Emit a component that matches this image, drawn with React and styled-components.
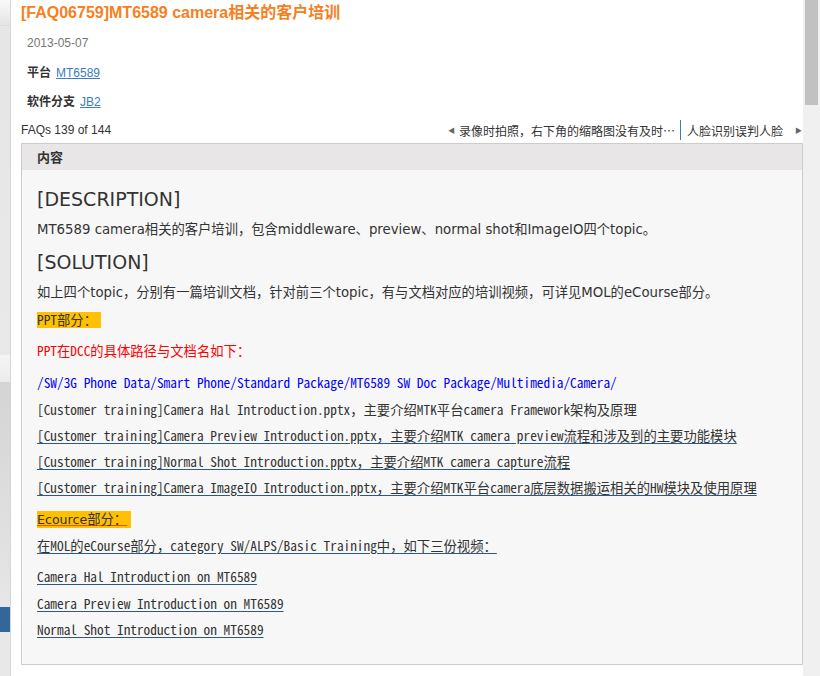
import React from "react";
import styled, { createGlobalStyle } from "styled-components";

const GlobalStyle = createGlobalStyle`
  html, body {
    margin: 0;
    padding: 0;
    height: 100%;
    overflow: hidden;
    background: #fff;
  }
  #root {
    height: 100%;
  }
`;

const Page = styled.div`
  display: flex;
  height: 676px;
  font-family: "Liberation Sans", "Noto Sans CJK SC", sans-serif;
  color: #333;
`;

const Sidebar = styled.aside`
  width: 10px;
  flex: none;
  display: flex;
  flex-direction: column;
  border-right: 1px solid #d6d6d6;
  background: #e9e9e9;
`;

const NavCap = styled.div`
  height: 25px;
  background: linear-gradient(#fafafa, #e4e4e4);
  border-bottom: 1px solid #dcdcdc;
`;

const NavFill = styled.div`
  height: ${(p) => p.$h}px;
  background: ${(p) => p.$bg};
`;

const Main = styled.main`
  flex: 1;
  min-width: 0;
  padding-left: 10px;
`;

const Title = styled.h1`
  margin: 0;
  font-size: 16px;
  line-height: 26px;
  font-weight: bold;
  color: #f7801e;
`;

const DateLine = styled.div`
  margin: 8px 0 0 6px;
  font-size: 12px;
  line-height: 18px;
  color: #777;
`;

const Meta = styled.div`
  margin: ${(p) => p.$gap}px 0 0 6px;
  font-size: 12px;
  line-height: 18px;
  color: #333;

  b {
    margin-right: 5px;
  }

  a {
    color: #3a7cc2;
    text-decoration: underline;
  }
`;

const NavRow = styled.div`
  margin-top: 9px;
  display: flex;
  align-items: center;
  justify-content: space-between;
  height: 20px;
  font-size: 12px;
`;

const Count = styled.span`
  color: #333;
`;

const Pager = styled.div`
  display: flex;
  align-items: center;
  height: 20px;
  color: #333;
  font-family: "Noto Sans CJK SC", sans-serif;
`;

const PagerLink = styled.span`
  display: flex;
  align-items: center;
  gap: 4px;
  height: 20px;
  padding: ${(p) => (p.$next ? "0 1px 0 6px" : "0 5px 0 0")};
  border-left: ${(p) => (p.$next ? "1px solid #3a7cc2" : "none")};
`;

const Arrow = styled.span`
  font-size: 7px;
  color: #666;
  margin-left: ${(p) => (p.$right ? "8px" : "0")};
`;

const Box = styled.section`
  margin-top: 3px;
  border: 1px solid #cccccc;
  background: #f7f7f7;
`;

const BoxHead = styled.div`
  height: 26px;
  line-height: 26px;
  padding-left: 15px;
  background: #e8e6e6;
  font-size: 13px;
  font-weight: bold;
  font-family: "Noto Sans CJK SC", sans-serif;
  color: #333;
`;

const BoxBody = styled.div`
  padding: 17px 15px 24px;
  font-family: "DejaVu Sans", "Noto Sans CJK SC", sans-serif;
`;

const Heading = styled.h2`
  margin: ${(p) => p.$gap || 0}px 0 0;
  font-size: 19px;
  line-height: 24px;
  font-weight: normal;
  color: #333;
`;

const Para = styled.p`
  margin: ${(p) => p.$gap}px 0 0;
  font-size: 13.3px;
  line-height: 20px;
  color: #333;
`;

const Line = styled.div`
  margin-top: ${(p) => p.$gap}px;
  font-family: "Noto Sans Mono CJK SC", "Noto Sans CJK SC", monospace;
  font-size: 13.33px;
  line-height: 20px;
  color: ${(p) => p.$color || "#333"};
  white-space: nowrap;
`;

const Under = styled.span`
  text-decoration: underline;
  text-decoration-color: #2b5b84;
  text-underline-offset: 2px;
`;

const Mark = styled.span`
  background: #ffc000;
  padding-right: 4px;
  line-height: 16px;
  display: inline-block;
  text-decoration: ${(p) => (p.$under ? "underline" : "none")};
  text-decoration-color: #e0502a;
  text-underline-offset: 1px;
`;

const Sans = styled.span`
  font-family: "DejaVu Sans", sans-serif;
  font-size: 12.6px;
`;

const Scroll = styled.div`
  width: 17px;
  flex: none;
  background: #f0f0f0;
  padding: 0 2px;
  box-sizing: border-box;
`;

const Thumb = styled.div`
  height: 105px;
  background: #c1c1c1;
`;

const docs = [
  { text: "[Customer training]Camera Preview Introduction.pptx，主要介绍MTK camera preview流程和涉及到的主要功能模块" },
  { text: "[Customer training]Normal Shot Introduction.pptx，主要介绍MTK camera capture流程" },
  { text: "[Customer training]Camera ImageIO Introduction.pptx，主要介绍MTK平台camera底层数据搬运相关的HW模块及使用原理" },
];

const videos = [
  { text: "Camera Hal Introduction on MT6589", gap: 11 },
  { text: "Camera Preview Introduction on MT6589", gap: 7 },
  { text: "Normal Shot Introduction on MT6589", gap: 6 },
];

export default function App() {
  return (
    <>
      <GlobalStyle />
      <Page>
        <Sidebar>
          <NavCap />
          <NavFill $h={330} $bg="linear-gradient(#e6e6e6, #e9e9e9)" />
          <NavFill $h={27} $bg="linear-gradient(#f4f4f4, #ececec)" />
          <NavFill $h={225} $bg="linear-gradient(#d4d4d4, #e6e6e6)" />
          <NavFill $h={25} $bg="#336699" />
          <NavFill $h={44} $bg="#e8e8e8" />
        </Sidebar>

        <Main>
          <Title>[FAQ06759]MT6589 camera相关的客户培训</Title>
          <DateLine>2013-05-07</DateLine>
          <Meta $gap={12}>
            <b>平台</b>
            <a href="#platform">MT6589</a>
          </Meta>
          <Meta $gap={11}>
            <b>软件分支</b>
            <a href="#branch">JB2</a>
          </Meta>

          <NavRow>
            <Count>FAQs 139 of 144</Count>
            <Pager>
              <PagerLink>
                <Arrow>◀</Arrow>
                录像时拍照，右下角的缩略图没有及时…
              </PagerLink>
              <PagerLink $next>
                人脸识别误判人脸
                <Arrow $right>▶</Arrow>
              </PagerLink>
            </Pager>
          </NavRow>

          <Box>
            <BoxHead>内容</BoxHead>
            <BoxBody>
              <Heading>[DESCRIPTION]</Heading>
              <Para $gap={9}>
                MT6589 camera相关的客户培训，包含middleware、preview、normal shot和ImageIO四个topic。
              </Para>
              <Heading $gap={10}>[SOLUTION]</Heading>
              <Para $gap={9}>
                如上四个topic，分别有一篇培训文档，针对前三个topic，有与文档对应的培训视频，可详见MOL的eCourse部分。
              </Para>
              <Line $gap={7}>
                <Mark>PPT部分：</Mark>
              </Line>
              <Line $gap={11} $color="#ff0000">
                PPT在DCC的具体路径与文档名如下：
              </Line>
              <Line $gap={12} $color="#0000ff">
                /SW/3G Phone Data/Smart Phone/Standard Package/MT6589 SW Doc Package/Multimedia/Camera/
              </Line>
              <Line $gap={7}>
                [Customer training]Camera Hal Introduction.pptx，主要介绍MTK平台camera Framework架构及原理
              </Line>
              {docs.map((d) => (
                <Line key={d.text} $gap={6}>
                  <Under>{d.text}</Under>
                </Line>
              ))}
              <Line $gap={11}>
                <Mark $under>
                  <Sans>Ecource</Sans>部分：
                </Mark>
              </Line>
              <Line $gap={7}>
                <Under>在MOL的eCourse部分，category SW/ALPS/Basic Training中，如下三份视频：</Under>
              </Line>
              {videos.map((v) => (
                <Line key={v.text} $gap={v.gap}>
                  <Under>{v.text}</Under>
                </Line>
              ))}
            </BoxBody>
          </Box>
        </Main>

        <Scroll>
          <Thumb />
        </Scroll>
      </Page>
    </>
  );
}
